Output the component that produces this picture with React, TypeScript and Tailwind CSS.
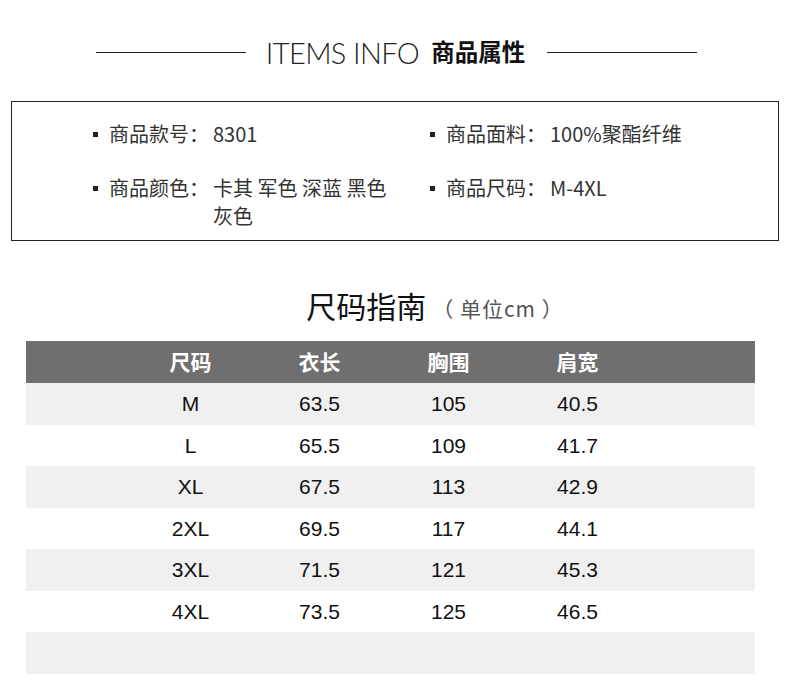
import React from "react";

const cjk = { fontFamily: '"Noto Sans CJK SC", "Noto Sans", sans-serif' };
const num = { fontFamily: '"Liberation Sans", "Noto Sans CJK SC", sans-serif' };

const rows = [
  ["M", "63.5", "105", "40.5"],
  ["L", "65.5", "109", "41.7"],
  ["XL", "67.5", "113", "42.9"],
  ["2XL", "69.5", "117", "44.1"],
  ["3XL", "71.5", "121", "45.3"],
  ["4XL", "73.5", "125", "46.5"],
  ["", "", "", ""],
];

function Bullet() {
  return <span className="inline-block w-[5px] h-[5px] bg-[#222] mr-[11px] mt-[12px] shrink-0" />;
}

export default function App() {
  return (
    <div className="w-[790px] h-[691px] bg-white overflow-hidden relative" style={cjk}>
      {/* Header */}
      <div className="flex items-center justify-center pt-[34px] h-[70px] pl-[3px]">
        <div className="w-[150px] h-px bg-[#222]" />
        <div className="flex items-center ml-[20px] mr-[22px]">
          <span
            className="text-[29px] font-light text-[#222] tracking-[-0.6px] leading-none"
            style={{ fontFamily: '"Lato", "Open Sans", sans-serif' }}
          >
            ITEMS INFO
          </span>
          <span className="ml-[12px] text-[23.5px] font-bold text-[#111] leading-none">商品属性</span>
        </div>
        <div className="w-[150px] h-px bg-[#222]" />
      </div>

      {/* Info box */}
      <div className="mx-[11px] mt-[31px] h-[140px] border border-[#222] pl-[81px] pt-[18px] text-[20px] text-[#333] leading-[28px]">
        <div className="grid grid-cols-[337px_1fr] gap-y-[26px]">
          <div className="flex">
            <Bullet />
            <span>商品款号：</span>
            <span className="ml-[4px]">8301</span>
          </div>
          <div className="flex">
            <Bullet />
            <span>商品面料：</span>
            <span className="ml-[4px]">100%聚酯纤维</span>
          </div>
          <div className="flex">
            <Bullet />
            <span className="shrink-0">商品颜色：</span>
            <span className="ml-[4px]">
              卡其 军色 深蓝 黑色
              <br />
              灰色
            </span>
          </div>
          <div className="flex">
            <Bullet />
            <span>商品尺码：</span>
            <span className="ml-[4px]">M-4XL</span>
          </div>
        </div>
      </div>

      {/* Title */}
      <div className="flex items-end justify-center mt-[39px] h-[40px] pl-[80px]">
        <span className="text-[30px] text-[#111] leading-none">尺码指南</span>
        <span className="text-[21px] text-[#555] leading-none ml-[6px] mb-[1px] whitespace-pre tracking-[1px]">（ 单位cm ）</span>
      </div>

      {/* Table */}
      <div className="mx-[26px] w-[729px] mt-[21px]">
        <div className="grid grid-cols-[100px_129px_129px_129px_129px_1fr] h-[42px] items-center bg-[#6f6f6f] text-white text-[21px] font-bold">
          <div />
          <div className="text-center">尺码</div>
          <div className="text-center">衣长</div>
          <div className="text-center">胸围</div>
          <div className="text-center">肩宽</div>
          <div />
        </div>
        {rows.map((r, i) => (
          <div
            key={i}
            className={`grid grid-cols-[100px_129px_129px_129px_129px_1fr] h-[41.5px] items-center text-[21px] text-[#111] ${
              i % 2 === 0 ? "bg-[#f0f0f0]" : "bg-white"
            }`}
            style={num}
          >
            <div />
            {r.map((c, j) => (
              <div key={j} className="text-center">
                {c}
              </div>
            ))}
            <div />
          </div>
        ))}
      </div>
    </div>
  );
}
